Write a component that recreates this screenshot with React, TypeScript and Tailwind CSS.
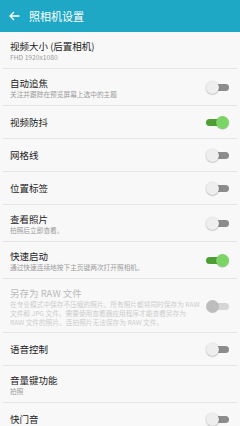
import React from "react";

type Row = {
  title: string;
  sub?: string[];
  toggle?: "on" | "off";
  disabled?: boolean;
};

const rows: Row[] = [
  { title: "视频大小 (后置相机)", sub: ["FHD 1920x1080"] },
  { title: "自动追焦", sub: ["关注并跟踪在预览屏幕上选中的主题"], toggle: "off" },
  { title: "视频防抖", toggle: "on" },
  { title: "网格线", toggle: "off" },
  { title: "位置标签", toggle: "off" },
  { title: "查看照片", sub: ["拍照后立即查看。"], toggle: "off" },
  { title: "快速启动", sub: ["通过快速连续地按下主页键两次打开照相机。"], toggle: "on" },
  {
    title: "另存为 RAW 文件",
    sub: [
      "在专业模式中保存不压缩的照片。所有照片都将同时保存为 RAW",
      "文件和 JPG 文件。需要使用查看器应用程序才能查看另存为",
      "RAW 文件的照片。连拍照片无法保存为 RAW 文件。",
    ],
    toggle: "off",
    disabled: true,
  },
  { title: "语音控制", toggle: "off" },
  { title: "音量键功能", sub: ["拍照"] },
  { title: "快门音", toggle: "off" },
];

const Toggle = ({ on, disabled }: { on: boolean; disabled?: boolean }) => {
  if (disabled) {
    return (
      <div className="relative w-[23px] h-[13px] shrink-0">
        <div className="absolute left-[5px] right-0 top-[3px] h-[7px] rounded-full bg-[#d6d6d6]" />
        <div className="absolute left-0 top-0 w-[13px] h-[13px] rounded-full bg-[#bdbdbd]" />
      </div>
    );
  }
  if (on) {
    return (
      <div className="relative w-[23px] h-[13px] shrink-0">
        <div className="absolute left-0 right-[4px] top-[3px] h-[7px] rounded-full bg-[#4e9e34]" />
        <div className="absolute right-0 top-0 w-[13px] h-[13px] rounded-full bg-[#7dd466] shadow-[0_0.5px_1px_rgba(0,0,0,0.25)]" />
      </div>
    );
  }
  return (
    <div className="relative w-[23px] h-[13px] shrink-0">
      <div className="absolute left-[5px] right-0 top-[3px] h-[7px] rounded-full bg-[#8c8c8c]" />
      <div className="absolute left-0 top-0 w-[13px] h-[13px] rounded-full bg-[#eeeeee] shadow-[0_0.5px_1.5px_rgba(0,0,0,0.35)]" />
    </div>
  );
};

export default function App() {
  return (
    <div
      className="w-[240px] h-[426px] overflow-hidden bg-[#f8f8f8]"
      style={{ fontFamily: '"Noto Sans CJK SC", "Noto Sans", sans-serif' }}
    >
      {/* Header */}
      <div className="h-[32px] bg-[#1fa8c5] flex items-center px-[9px] gap-[9px]">
        <svg width="11" height="10" viewBox="0 0 11 10" fill="none">
          <path d="M10.5 5H1.2M5 1L1 5l4 4" stroke="white" strokeWidth="1.3" />
        </svg>
        <span className="text-white text-[11px] leading-none">照相机设置</span>
      </div>

      {rows.map((row, i) => (
        <div key={i}>
          {i > 0 && <div className="mx-[3px] h-px bg-[#e5e5e5]" />}
          <div
            className={
              row.disabled
                ? "flex items-center pl-[10px] pr-[11px] pt-[7px] pb-[5px]"
                : row.sub
                ? "flex items-center pl-[10px] pr-[11px] pt-[7px] pb-[6px]"
                : "flex items-center pl-[10px] pr-[11px] h-[32px]"
            }
          >
            <div className="flex-1 min-w-0">
              <div
                className={
                  row.disabled
                    ? "text-[9.5px] leading-[14px] text-[#bcbcbc]"
                    : "text-[9.5px] leading-[14px] text-[#222222]"
                }
              >
                {row.title}
              </div>
              {row.sub &&
                row.sub.map((line, j) => (
                  <div
                    key={j}
                    className={
                      row.disabled
                        ? "text-[6.7px] leading-[9px] text-[#cdcdcd] whitespace-nowrap"
                        : "text-[6.7px] leading-[9px] text-[#9b9b9b] whitespace-nowrap"
                    }
                  >
                    {line}
                  </div>
                ))}
            </div>
            {row.toggle && <Toggle on={row.toggle === "on"} disabled={row.disabled} />}
          </div>
        </div>
      ))}
    </div>
  );
}
